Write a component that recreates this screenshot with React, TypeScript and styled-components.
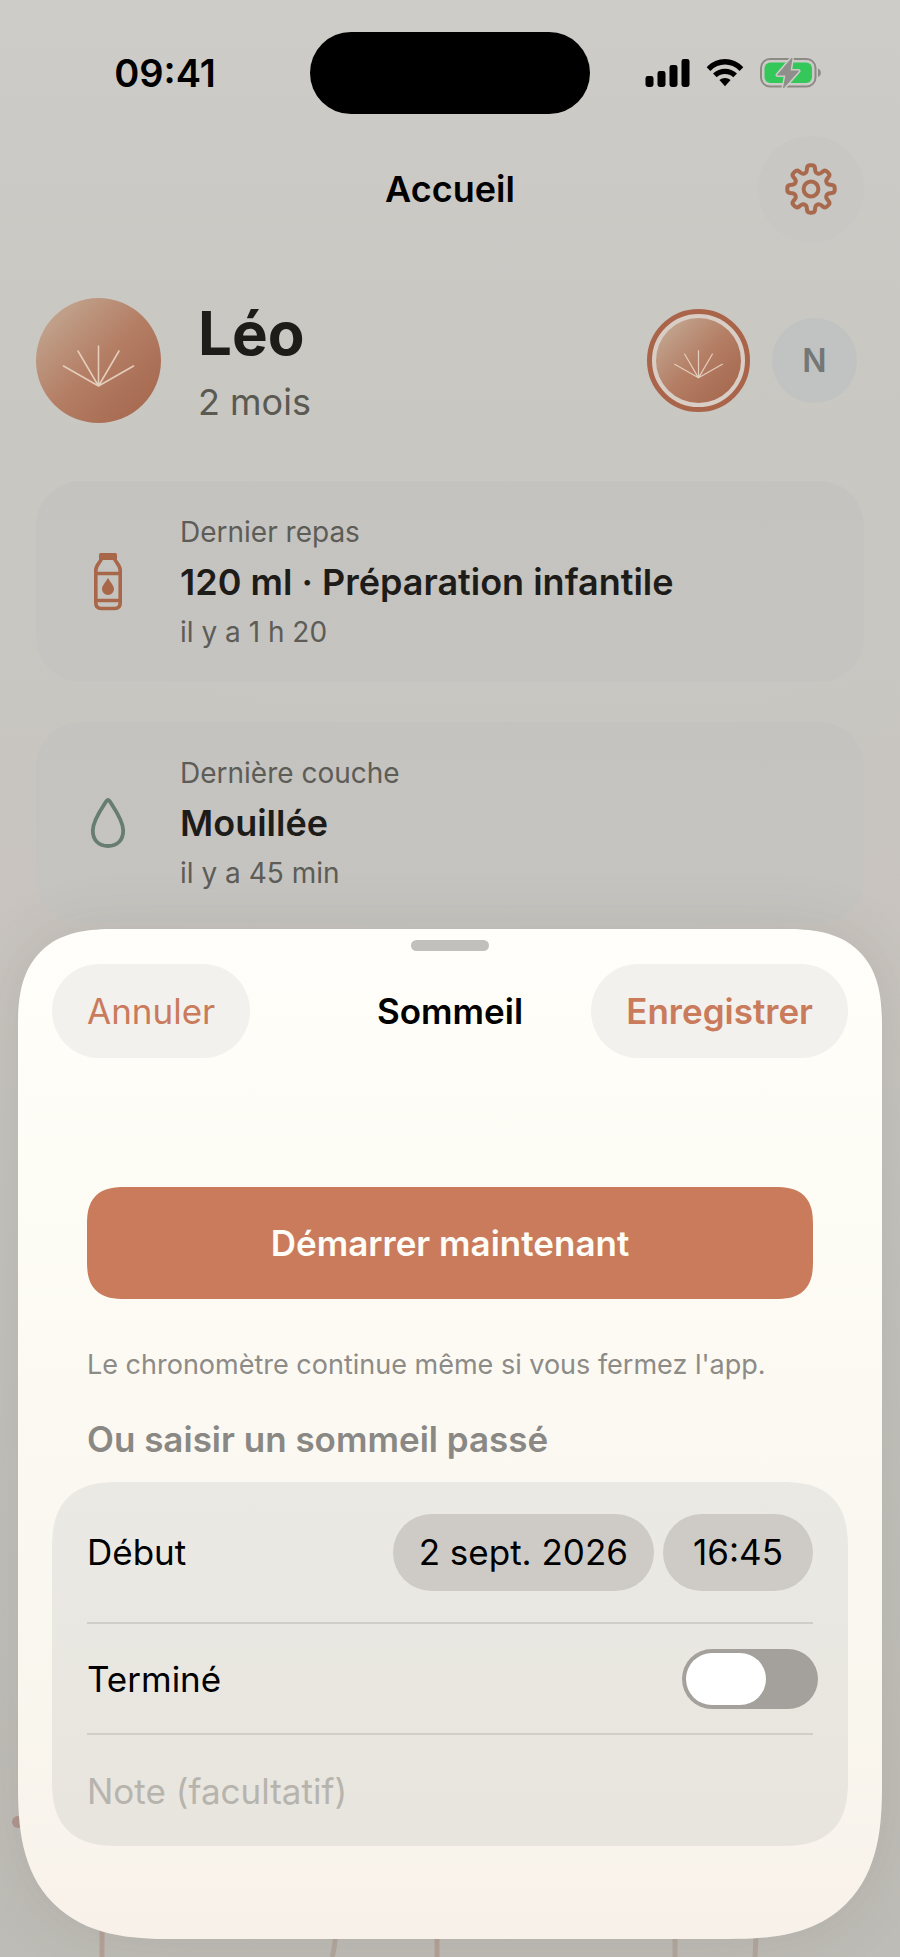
import React, { useState } from "react";
import styled, { createGlobalStyle, css } from "styled-components";

const accent = "#c97b5b";

const GlobalStyle = createGlobalStyle`
  *, *::before, *::after { box-sizing: border-box; }
  body {
    margin: 0;
    background: #c9c8c3;
    font-family: Inter, "Liberation Sans", sans-serif;
    -webkit-font-smoothing: antialiased;
  }
  button, input { font: inherit; color: inherit; }
  h1, h2, p { margin: 0; }
`;

const Screen = styled.div`
  display: grid;
  grid-template-columns: minmax(0, 1fr);
  min-height: 100vh;
  overflow: hidden;
  background:
    radial-gradient(ellipse 60% 12% at 0% 46%, rgba(203, 192, 188, 0.3), transparent),
    radial-gradient(ellipse 30% 12% at 100% 46%, rgba(203, 192, 188, 0.3), transparent),
    linear-gradient(#cdccc8 0%, #c9c8c3 15%, #c8c6c1 40%, #c3c1bc 70%, #bebcb6 100%);
`;

const layer = css`
  grid-area: 1 / 1;
`;

// Continuous corners where the browser has them, plain arcs elsewhere.
const corners = (plain: string, smooth: string) => css`
  border-radius: ${plain};

  @supports (corner-shape: superellipse(1.4)) {
    border-radius: ${smooth};
    corner-shape: superellipse(1.4);
  }
`;

const Home = styled.main`
  ${layer}
  padding: 32px 36px 0;
`;

const StatusBar = styled.div`
  display: grid;
  grid-template-columns: 1fr 280px 1fr;
  align-items: center;
  margin: 0 -36px 22px;
`;

const Time = styled.span`
  padding-left: 20px;
  text-align: center;
  font-size: 38px;
  font-weight: 600;
  line-height: 48px;
  color: #000;
`;

const Island = styled.div`
  height: 82px;
  border-radius: 41px;
  background: #000;
`;

const StatusIcons = styled.div`
  display: flex;
  align-items: center;
  justify-content: center;
  gap: 16px;
  padding-right: 24px;
`;

const NavBar = styled.header`
  display: grid;
  grid-template-columns: 1fr auto 1fr;
  align-items: center;
`;

const NavTitle = styled.h1`
  grid-column: 2;
  font-size: 36px;
  font-weight: 600;
  line-height: 48px;
  color: #000;
`;

const SheetTitle = styled.h2`
  font-size: 35px;
  font-weight: 600;
  line-height: 48px;
  color: #000;
`;

const RoundButton = styled.button`
  display: grid;
  place-items: center;
  justify-self: end;
  width: 106px;
  height: 106px;
  padding: 0;
  border: 0;
  border-radius: 50%;
  background: #c8c7c3;
`;

const Profile = styled.section`
  display: flex;
  align-items: center;
  gap: 37px;
  margin: 49px 0 52px;
  padding-right: 7px;
`;

const ProfileText = styled.div`
  flex: 1;
`;

const Name = styled.h2`
  font-size: 60px;
  font-weight: 700;
  line-height: 84px;
  color: #1d1c19;
`;

const Age = styled.p`
  font-size: 36px;
  line-height: 54px;
  color: #5a5952;
`;

const Avatar = styled.span<{ $size: number }>`
  display: block;
  width: ${(p) => p.$size}px;
  height: ${(p) => p.$size}px;
  border-radius: 50%;
  background: linear-gradient(135deg, #c3a791 8%, #b47e65 50%, #a5684e 92%);

  svg { display: block; }
`;

const Children = styled.div`
  display: flex;
  align-items: center;
  gap: 22px;
`;

const ChildButton = styled.button<{ $selected?: boolean }>`
  display: grid;
  place-items: center;
  width: ${(p) => (p.$selected ? 103 : 85)}px;
  height: ${(p) => (p.$selected ? 103 : 85)}px;
  padding: 0;
  border: ${(p) => (p.$selected ? "5px solid #a9644a" : "0")};
  border-radius: 50%;
  background: ${(p) => (p.$selected ? "#d8cec6" : "#c0c3c1")};
  font-size: 32px;
  font-weight: 600;
  color: #747776;
`;

const Cards = styled.div`
  display: grid;
  gap: 40px;
`;

const Card = styled.article`
  display: grid;
  grid-template-columns: 72px 1fr;
  align-items: center;
  gap: 36px;
  padding: 29px 36px 28px;
  border-radius: 45px;
  background: linear-gradient(#c4c3c0, #c5c4c0);
`;

const CardIcon = styled.span`
  display: grid;
  place-items: center;
`;

const CardMeta = styled.p`
  font-size: 28px;
  line-height: 44px;
  color: #5d5c56;
`;

const CardTitle = styled.p`
  font-size: 36px;
  font-weight: 600;
  line-height: 56px;
  color: #1d1c19;
`;

const Stems = styled.svg`
  ${layer}
  align-self: end;
  width: 100%;
  height: 150px;
`;

const Sheet = styled.section`
  ${layer}
  ${corners("80px 80px 124px 124px", "98px 98px 154px 154px")}
  align-self: end;
  z-index: 1;
  margin: 18px;
  padding: 11px 34px 93px;
  background: linear-gradient(#fffefa 0%, #fdfcf5 25%, #fbf8f1 55%, #f9f6ee 80%, #f8f1ea 100%);
  box-shadow: 0 0 60px rgba(90, 88, 70, 0.14);
`;

const Grabber = styled.div`
  width: 78px;
  height: 11px;
  margin: 0 auto 13px;
  border-radius: 6px;
  background: #c1c0bd;
`;

const SheetHeader = styled.header`
  display: grid;
  grid-template-columns: 1fr auto 1fr;
  align-items: center;
  margin-bottom: 129px;
`;

const PillButton = styled.button<{ $strong?: boolean }>`
  justify-self: ${(p) => (p.$strong ? "end" : "start")};
  height: 94px;
  padding: 0 35px;
  border: 0;
  border-radius: 47px;
  background: #f3f1ee;
  font-size: 35px;
  font-weight: ${(p) => (p.$strong ? 600 : 400)};
  color: ${accent};
`;

const SheetBody = styled.div`
  padding: 0 35px;
`;

const StartButton = styled.button`
  ${corners("34px", "38px")}
  display: block;
  width: 100%;
  height: 112px;
  padding: 0;
  border: 0;
  background: ${accent};
  font-size: 35px;
  font-weight: 600;
  color: #fffdf8;
`;

const Hint = styled.p`
  margin-top: 46px;
  font-size: 27px;
  line-height: 40px;
  color: #8c8b87;
`;

const SectionTitle = styled.h2`
  margin: 30px 0 19px;
  font-size: 35px;
  font-weight: 600;
  line-height: 48px;
  color: #898884;
`;

const FormGroup = styled.div`
  ${corners("58px", "68px")}
  padding: 0 35px;
  background: linear-gradient(#ebe9e4, #e8e5de);
  font-size: 35px;
  color: #000;
`;

const FormRow = styled.div<{ $tall?: boolean }>`
  display: flex;
  align-items: center;
  justify-content: space-between;
  min-height: ${(p) => (p.$tall ? 142 : 111)}px;
  border-bottom: 2px solid #d0cec9;

  &:last-child { border-bottom: 0; }
`;

const Chips = styled.div`
  display: flex;
  gap: 9px;
`;

const Chip = styled.button`
  min-width: 150px;
  height: 77px;
  padding: 0 26px;
  border: 0;
  border-radius: 39px;
  background: #cecbc7;
`;

const Toggle = styled.input`
  appearance: none;
  flex: none;
  width: 136px;
  height: 60px;
  margin: 0 -5px 0 0;
  padding: 4px;
  border-radius: 30px;
  background: #a4a09c;

  &::before {
    content: "";
    display: block;
    width: 80px;
    height: 52px;
    border-radius: 26px;
    background: #fff;
  }

  &:checked { background: ${accent}; }
  &:checked::before { margin-left: auto; }
`;

const NoteInput = styled.input`
  width: 100%;
  padding: 0;
  border: 0;
  outline: 0;
  background: transparent;

  &::placeholder { color: #b7b4ae; opacity: 1; }
`;

type Point = [number, number];

// Outline of an eight-toothed cog with softened corners.
function gearPath(): string {
  const points: Point[] = [];
  for (let i = 0; i < 8; i++) {
    const profile: Point[] = [[17, -15], [24, -9], [24, 9], [17, 15]];
    profile.forEach(([r, offset]) => {
      const a = ((i * 45 + offset - 90) * Math.PI) / 180;
      points.push([28 + r * Math.cos(a), 28 + r * Math.sin(a)]);
    });
  }
  const mix = (a: Point, b: Point, t: number): string =>
    `${(a[0] + (b[0] - a[0]) * t).toFixed(2)} ${(a[1] + (b[1] - a[1]) * t).toFixed(2)}`;
  return (
    points
      .map((p, i) => {
        const prev = points[(i + points.length - 1) % points.length];
        const next = points[(i + 1) % points.length];
        return `${i ? "L" : "M"}${mix(p, prev, 0.38)} Q${p[0].toFixed(2)} ${p[1].toFixed(2)} ${mix(p, next, 0.38)}`;
      })
      .join(" ") + "Z"
  );
}

const GearIcon = () => (
  <svg width="56" height="56" viewBox="0 0 56 56" fill="none" stroke="#a9694d" strokeWidth="4" strokeLinejoin="round" aria-hidden="true">
    <path d={gearPath()} />
    <circle cx="28" cy="28" r="7.4" />
  </svg>
);

const SignalIcon = () => (
  <svg width="45" height="30" viewBox="0 0 45 30" aria-hidden="true">
    <rect x="0.5" y="18" width="8" height="11" rx="2.4" />
    <rect x="12.5" y="13" width="8" height="16" rx="2.4" />
    <rect x="24.5" y="7" width="8" height="22" rx="2.4" />
    <rect x="36.5" y="1" width="8" height="28" rx="2.4" />
  </svg>
);

const WifiIcon = () => (
  <svg width="38" height="30" viewBox="0 0 38 30" aria-hidden="true">
    <path d="M.7 9.2C11-1.700 27-1.700 37.300 9.200L33.600 12.900C25.200 4.400 12.800 4.400 4.400 12.900Z" />
    <path d="M7 15.600C13.700 9 24.300 9 31 15.600L27.300 19.200C22.500 14.800 15.500 14.800 10.700 19.200Z" />
    <path d="M13.400 22C16.500 19.300 21.500 19.300 24.600 22L19 28.300Z" />
  </svg>
);

const bolt = "M32 1L17.500 18H26L23.500 31L38.500 14H30Z";

const BatteryIcon = () => (
  <svg width="62" height="32" viewBox="0 0 62 32" aria-hidden="true">
    <rect x="1" y="2" width="54.500" height="27.500" rx="9" fill="none" stroke="#8d8a86" strokeWidth="2" />
    <rect x="4.500" y="5.500" width="47.500" height="20.500" rx="5.800" fill="#34c759" />
    <path d="M58 11.500C61.800 13 61.800 18.500 58 20Z" fill="#8d8a86" />
    <path d={bolt} fill="#cccbc7" stroke="#cccbc7" strokeWidth="4" strokeLinejoin="round" />
    <path d={bolt} fill="#908e8a" stroke="#908e8a" strokeWidth="1" strokeLinejoin="round" />
  </svg>
);

const Rays = ({ size, width }: { size: number; width: number }) => (
  <svg width={size} height={size} viewBox="0 0 125 125" fill="none" stroke="#e4cdbb" strokeWidth={width} strokeLinecap="round" aria-hidden="true">
    <path d="M62.500 88V48M62.500 88L42 53M62.500 88L83 53M62.500 88L27.500 68M62.500 88L97.500 68" />
  </svg>
);

const BottleIcon = () => (
  <svg width="30" height="60" viewBox="0 0 30 60" aria-hidden="true">
    <rect x="6" y="1" width="18" height="7" rx="1.600" fill="#a9674a" />
    <path d="M8.500 7C6.500 11 2.800 13.500 2.800 18V51Q2.800 56.500 8.300 56.500H21.700Q27.200 56.500 27.200 51V18C27.200 13.500 23.500 11 21.500 7M3 21.500H27M3 48.500H27" fill="none" stroke="#a9674a" strokeWidth="3.600" />
    <path d="M15 26C17.500 30.500 21 33.500 21 37A6 6 0 0 1 9 37C9 33.500 12.500 30.500 15 26Z" fill="#a9674a" />
  </svg>
);

const DropIcon = () => (
  <svg width="36" height="52" viewBox="0 0 36 52" fill="none" stroke="#667d70" strokeWidth="3.800" strokeLinejoin="round" aria-hidden="true">
    <path d="M16.600 3.800Q18 2 19.400 3.800C23.500 10.500 33.200 23 33.200 33.500C33.200 43.500 27 49 18 49S2.800 43.500 2.800 33.500C2.800 23 12.500 10.500 16.600 3.800Z" />
  </svg>
);

const records = [
  { label: "Dernier repas", value: "120 ml · Préparation infantile", when: "il y a 1 h 20", icon: <BottleIcon /> },
  { label: "Dernière couche", value: "Mouillée", when: "il y a 45 min", icon: <DropIcon /> },
];

export default function App() {
  const [ended, setEnded] = useState(false);

  return (
    <>
      <GlobalStyle />
      <Screen>
        <Home>
          <StatusBar>
            <Time>09:41</Time>
            <Island />
            <StatusIcons>
              <SignalIcon />
              <WifiIcon />
              <BatteryIcon />
            </StatusIcons>
          </StatusBar>
          <NavBar>
            <NavTitle>Accueil</NavTitle>
            <RoundButton type="button" aria-label="Réglages">
              <GearIcon />
            </RoundButton>
          </NavBar>
          <Profile>
            <Avatar $size={125}>
              <Rays size={125} width={1.6} />
            </Avatar>
            <ProfileText>
              <Name>Léo</Name>
              <Age>2 mois</Age>
            </ProfileText>
            <Children>
              <ChildButton type="button" $selected aria-label="Léo">
                <Avatar $size={85}>
                  <Rays size={85} width={1.8} />
                </Avatar>
              </ChildButton>
              <ChildButton type="button">N</ChildButton>
            </Children>
          </Profile>
          <Cards>
            {records.map((r) => (
              <Card key={r.label}>
                <CardIcon>{r.icon}</CardIcon>
                <div>
                  <CardMeta>{r.label}</CardMeta>
                  <CardTitle>{r.value}</CardTitle>
                  <CardMeta>{r.when}</CardMeta>
                </div>
              </Card>
            ))}
          </Cards>
        </Home>

        <Stems viewBox="0 0 900 150" preserveAspectRatio="none" fill="none" stroke="#b5a198" strokeWidth="5" aria-hidden="true">
          <circle cx="18" cy="15" r="6" fill="#b0958e" stroke="none" />
          <path d="M102 110V150M437 110V150" />
          <path d="M336 110Q336 138 332 150M675 110V150M757 110L755 150" stroke="#b3a79d" />
        </Stems>

        <Sheet role="dialog" aria-labelledby="sheet-title">
          <Grabber />
          <SheetHeader>
            <PillButton type="button">Annuler</PillButton>
            <SheetTitle id="sheet-title">Sommeil</SheetTitle>
            <PillButton type="button" $strong>Enregistrer</PillButton>
          </SheetHeader>
          <SheetBody>
            <StartButton type="button">Démarrer maintenant</StartButton>
            <Hint>Le chronomètre continue même si vous fermez l'app.</Hint>
            <SectionTitle>Ou saisir un sommeil passé</SectionTitle>
          </SheetBody>
          <FormGroup>
            <FormRow $tall>
              <span id="start-label">Début</span>
              <Chips role="group" aria-labelledby="start-label">
                <Chip type="button">2 sept. 2026</Chip>
                <Chip type="button">16:45</Chip>
              </Chips>
            </FormRow>
            <FormRow>
              <label htmlFor="ended">Terminé</label>
              <Toggle id="ended" type="checkbox" role="switch" checked={ended} onChange={(e) => setEnded(e.target.checked)} />
            </FormRow>
            <FormRow>
              <NoteInput type="text" aria-label="Note" placeholder="Note (facultatif)" />
            </FormRow>
          </FormGroup>
        </Sheet>
      </Screen>
    </>
  );
}
